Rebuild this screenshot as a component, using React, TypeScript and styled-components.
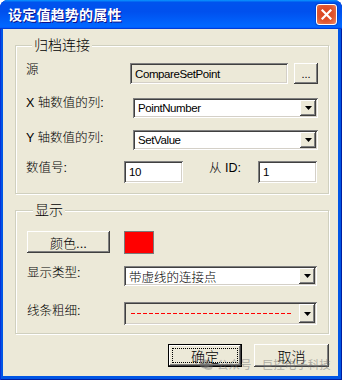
import React from 'react';
import styled, { createGlobalStyle } from 'styled-components';

const SANS = `"Liberation Sans", "Noto Sans CJK SC", sans-serif`;

const GlobalStyle = createGlobalStyle`
  html, body {
    margin: 0;
    padding: 0;
    background: #fff;
  }
`;

const Window = styled.div`
  position: relative;
  width: 342px;
  height: 380px;
  box-sizing: border-box;
  display: flex;
  flex-direction: column;
  overflow: hidden;
  border-radius: 8px 8px 0 0;
  background: #0055e5;
  box-shadow: inset 1px 0 #0831d9, inset -1px -1px #001ea0;
  font-family: ${SANS};
  color: #000;
`;

const TitleBar = styled.div`
  flex: none;
  height: 29px;
  display: flex;
  align-items: center;
  justify-content: space-between;
  padding: 0 5px 0 8px;
  background: linear-gradient(180deg, #0997ff, #0053ee 8%, #0050ee 40%, #0066ff 88%, #0066ff 93%, #005bff 95%, #003dd7 96%, #003dd7);
`;

const Title = styled.span`
  font-size: 14px;
  font-weight: bold;
  line-height: 16px;
  color: #fff;
  text-shadow: 1px 1px #0f1089;
  letter-spacing: 0.2px;
`;

const CloseButton = styled.button`
  width: 21px;
  height: 21px;
  padding: 0;
  display: flex;
  align-items: center;
  justify-content: center;
  border: 1px solid #fff;
  border-radius: 3px;
  background: radial-gradient(circle at 45% 45%, #d8401c 0%, #e0552f 55%, #ea7a55 85%, #f3a68a 100%);
  box-shadow: 0 0 0 1px rgba(0, 40, 160, 0.35);
`;

const Body = styled.div`
  flex: 1;
  margin: 0 4px 4px 3px;
  padding: 9px 9px 0 12px;
  background: #ece9d8;
  display: flex;
  flex-direction: column;
`;

const Group = styled.fieldset<{ $pad: string; $mt?: number }>`
  margin: ${(p) => p.$mt ?? 0}px 0 0 0;
  padding: ${(p) => p.$pad};
  min-width: 0;
  border: 1px solid #d0d0bf;
  box-shadow: inset 1px 1px #fff, 1px 1px #fff;
  display: flex;
  flex-direction: column;
`;

const Legend = styled.legend`
  margin-left: 6px;
  padding: 0 2px;
  font-size: 14px;
  font-weight: 300;
  line-height: 14px;
  background: #ece9d8;
`;

const Row = styled.div<{ $mt?: number }>`
  display: flex;
  align-items: flex-start;
  margin-top: ${(p) => p.$mt ?? 0}px;
`;

const Label = styled.span<{ $w: number; $dy?: number; $ml?: number }>`
  flex: none;
  width: ${(p) => p.$w}px;
  margin-top: ${(p) => p.$dy ?? 0}px;
  margin-left: ${(p) => p.$ml ?? 0}px;
  font-size: 12.5px;
  font-weight: 300;
  line-height: 14px;
  white-space: nowrap;
`;

const sunken = `
  box-shadow: inset 1px 1px #808080, inset -1px -1px #fff, inset 2px 2px #404040, inset -2px -2px #d4d0c8;
`;

const raised = `
  box-shadow: inset -1px -1px #404040, inset 1px 1px #fff, inset -2px -2px #808080, inset 2px 2px #ece9d8;
`;

const Field = styled.div<{ $w?: number; $h: number; $bg?: string }>`
  ${sunken}
  box-sizing: border-box;
  flex: ${(p) => (p.$w ? 'none' : '1 1 0')};
  min-width: 0;
  width: ${(p) => (p.$w ? `${p.$w}px` : 'auto')};
  height: ${(p) => p.$h}px;
  padding: 2px;
  display: flex;
  align-items: stretch;
  background: ${(p) => p.$bg ?? '#fff'};
`;

const FieldText = styled.span<{ $cjk?: boolean }>`
  flex: 1;
  display: flex;
  align-items: center;
  padding-left: 3px;
  font-size: ${(p) => (p.$cjk ? '12.5px' : '11.5px')};
  font-weight: ${(p) => (p.$cjk ? 300 : 400)};
  letter-spacing: ${(p) => (p.$cjk ? '0' : '-0.4px')};
  white-space: nowrap;
  overflow: hidden;
`;

const DropButton = styled.span`
  ${raised}
  flex: none;
  width: 16px;
  display: flex;
  align-items: center;
  justify-content: center;
  background: #ece9d8;
`;

const LinePreview = styled.svg`
  flex: 1 1 0;
  width: 0;
  min-width: 0;
  height: 1px;
  align-self: flex-start;
  margin: 9px 6px 0 5px;
`;

const PushButton = styled.button<{ $w: number; $h: number; $fs?: number }>`
  ${raised}
  box-sizing: border-box;
  flex: none;
  width: ${(p) => p.$w}px;
  height: ${(p) => p.$h}px;
  margin: 0;
  padding: 0;
  border: none;
  background: #ece9d8;
  font-family: ${SANS};
  font-size: ${(p) => p.$fs ?? 13}px;
  font-weight: 300;
  color: #000;
  display: flex;
  align-items: center;
  justify-content: center;
`;

const DefaultButton = styled(PushButton)`
  border: 1px solid #000;
  padding: 3px;
`;

const FocusRing = styled.span`
  flex: 1;
  align-self: stretch;
  display: flex;
  align-items: center;
  justify-content: center;
  border: 1px dotted #000;
`;

const Swatch = styled.div`
  flex: none;
  width: 30px;
  height: 23px;
  margin-left: 14px;
  box-sizing: border-box;
  background: #ff0000;
  border: 1px solid #7a7a7a;
`;

const Footer = styled.div`
  display: flex;
  justify-content: flex-end;
  gap: 12px;
  margin-top: 10px;
`;

const Watermark = styled.div`
  position: absolute;
  left: 199px;
  top: 358px;
  display: flex;
  align-items: center;
  gap: 4px;
  font-size: 11.5px;
  line-height: 14px;
  color: rgba(110, 110, 110, 0.5);
  white-space: nowrap;
  pointer-events: none;
`;

const Arrow = () => (
  <svg width="7" height="4" viewBox="0 0 7 4">
    <polygon points="0,0 7,0 3.5,4" fill="#000" />
  </svg>
);

const Combo: React.FC<{ text?: string; cjk?: boolean; h: number; dashed?: boolean }> = ({ text, cjk, h, dashed }) => (
  <Field $h={h} $bg={dashed ? '#ece9d8' : '#fff'}>
    {dashed ? (
      <LinePreview>
        <line x1="0" y1="0.5" x2="100%" y2="0.5" stroke="#ff0000" strokeWidth="1" strokeDasharray="4 2" shapeRendering="crispEdges" />
      </LinePreview>
    ) : (
      <FieldText $cjk={cjk}>{text}</FieldText>
    )}
    <DropButton>
      <Arrow />
    </DropButton>
  </Field>
);

export default function App() {
  return (
    <>
      <GlobalStyle />
      <Window>
        <TitleBar>
          <Title>设定值趋势的属性</Title>
          <CloseButton aria-label="close">
            <svg width="11" height="11" viewBox="0 0 11 11">
              <path d="M1.5 1.5 L9.5 9.5 M9.5 1.5 L1.5 9.5" stroke="#fff" strokeWidth="2.2" strokeLinecap="square" />
            </svg>
          </CloseButton>
        </TitleBar>
        <Body>
          <Group $pad="11px 10px 10px 10px">
            <Legend>归档连接</Legend>
            <Row>
              <Label $w={104}>源</Label>
              <Field $h={21} $bg="#ece9d8">
                <FieldText>CompareSetPoint</FieldText>
              </Field>
              <PushButton $w={24} $h={21} $fs={11} style={{ marginLeft: 6 }}>
                ...
              </PushButton>
            </Row>
            <Row $mt={14}>
              <Label $w={107} $dy={-2}>X 轴数值的列:</Label>
              <Combo h={20} text="PointNumber" />
            </Row>
            <Row $mt={12}>
              <Label $w={107} $dy={1}>Y 轴数值的列:</Label>
              <Combo h={20} text="SetValue" />
            </Row>
            <Row $mt={11}>
              <Label $w={98}>数值号:</Label>
              <Field $w={59} $h={22}>
                <FieldText>10</FieldText>
              </Field>
              <Label $w={49} $ml={26}>从 ID:</Label>
              <Field $w={59} $h={22}>
                <FieldText>1</FieldText>
              </Field>
            </Row>
          </Group>

          <Group $pad="14px 11px 8px 11px" $mt={9}>
            <Legend>显示</Legend>
            <Row>
              <PushButton $w={83} $h={22}>颜色...</PushButton>
              <Swatch />
            </Row>
            <Row $mt={12}>
              <Label $w={97} $dy={0}>显示类型:</Label>
              <Combo h={20} cjk text="带虚线的连接点" />
            </Row>
            <Row $mt={16}>
              <Label $w={97} $dy={2}>线条粗细:</Label>
              <Combo h={23} dashed />
            </Row>
          </Group>

          <Footer>
            <DefaultButton $w={74} $h={23} $fs={14}>
              <FocusRing>确定</FocusRing>
            </DefaultButton>
            <PushButton $w={75} $h={23} $fs={14}>取消</PushButton>
          </Footer>
        </Body>
        <Watermark>
          <svg width="14" height="12" viewBox="0 0 14 12">
            <ellipse cx="5.5" cy="5" rx="5.2" ry="4.4" fill="currentColor" />
            <ellipse cx="9.5" cy="7.5" rx="4.2" ry="3.6" fill="currentColor" opacity="0.8" />
          </svg>
          <span>公众号 · 巨控电子科技</span>
        </Watermark>
      </Window>
    </>
  );
}
